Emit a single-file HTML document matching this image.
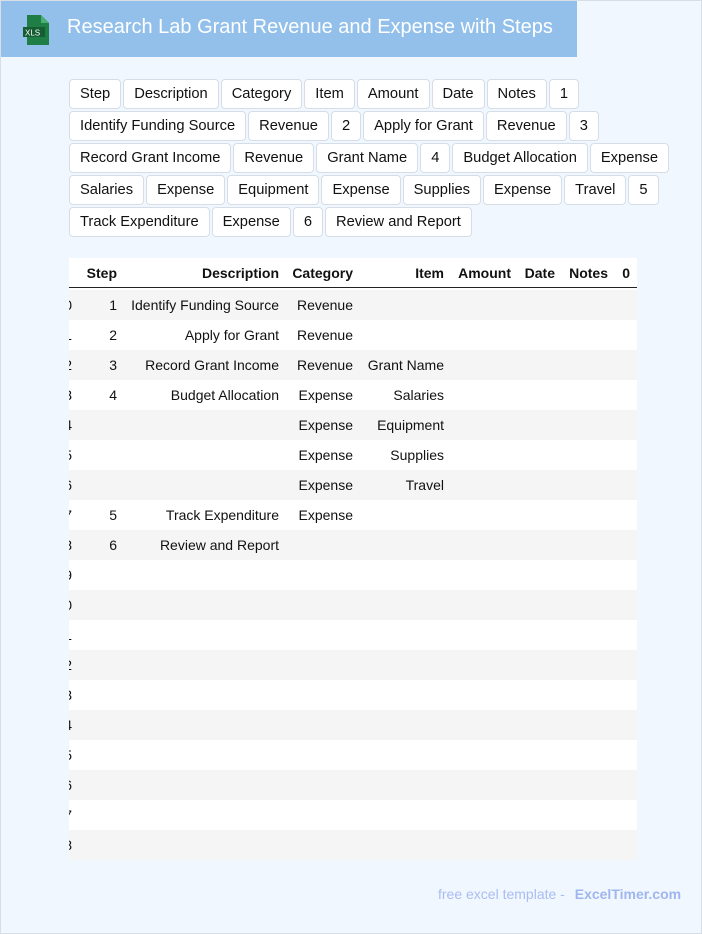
<!DOCTYPE html>
<html><head><style>
*{margin:0;padding:0;box-sizing:border-box}
body{width:702px;height:934px;background:#f0f7ff;font-family:"Liberation Sans",Arial,sans-serif;position:relative;overflow:hidden;border:1px solid #d8dee6}
.hdr{position:absolute;left:0;top:0;width:576px;height:56px;background:#92c0ea}
.hdr h1{position:absolute;left:66px;top:15px;font-size:20px;font-weight:normal;color:#fff;white-space:nowrap}
.btns{position:absolute;left:68px;top:78px;width:610px;display:flex;flex-wrap:wrap;gap:2px 2px}
.btns span{display:inline-block;height:30px;line-height:28px;padding:0 10px;background:#fff;border:1px solid #d6dde6;border-radius:4px;font-size:14.7px;color:#111;white-space:nowrap}
.tbl{position:absolute;left:68px;top:257px;width:568px;height:602px;overflow:hidden;background:#fff;font-size:14px;color:#111}
.row{position:absolute;left:0;width:568px;height:30px}
.row.g{background:#f5f5f5}
.c{position:absolute;top:7px;white-space:nowrap;text-align:right}
.h .c{font-weight:bold}
.h{border-bottom:1px solid #222}
.foot{position:absolute;top:885px;left:437px;font-size:14px;color:#aabdf0;white-space:nowrap}
.foot b{color:#a0b6ee;margin-left:6px}
</style></head><body>
<div class="hdr">
<svg style="position:absolute;left:22px;top:14px" width="28" height="30" viewBox="0 0 28 30"><path d="M4 0h14l8 8v22H4z" fill="#1e7e45"/><path d="M18 0v8h8z" fill="#4caf72"/><rect x="0" y="12" width="22" height="10" fill="#155d33"/><text x="2" y="20.5" font-size="8" fill="#fff" font-family="Liberation Sans">XLS</text></svg>
<h1>Research Lab Grant Revenue and Expense with Steps</h1>
</div>
<div class="btns">
<span>Step</span><span>Description</span><span>Category</span><span>Item</span><span>Amount</span><span>Date</span><span>Notes</span><span>1</span>
<span>Identify Funding Source</span><span>Revenue</span><span>2</span><span>Apply for Grant</span><span>Revenue</span><span>3</span>
<span>Record Grant Income</span><span>Revenue</span><span>Grant Name</span><span>4</span><span>Budget Allocation</span><span>Expense</span>
<span>Salaries</span><span>Expense</span><span>Equipment</span><span>Expense</span><span>Supplies</span><span>Expense</span><span>Travel</span><span>5</span>
<span>Track Expenditure</span><span>Expense</span><span>6</span><span>Review and Report</span>
</div>
<div class="tbl" id="t"></div>
<div class="foot">free excel template - <b>ExcelTimer.com</b></div>
<script>
var t=document.getElementById('t');
var rights=[48,210,284,375,442,486,539,561];
function row(y,cls,vals,extra){var h='<div class="row '+cls+'" style="top:'+y+'px">';
vals.forEach(function(v,i){if(v!=='')h+='<div class="c" style="right:'+(568-rights[i])+'px">'+v+'</div>';});
return h+(extra||'')+'</div>';}
var html=row(0,'h',['Step','Description','Category','Item','Amount','Date','Notes','0']);
var d=[['1','Identify Funding Source','Revenue',''],['2','Apply for Grant','Revenue',''],['3','Record Grant Income','Revenue','Grant Name'],['4','Budget Allocation','Expense','Salaries'],['','','Expense','Equipment'],['','','Expense','Supplies'],['','','Expense','Travel'],['5','Track Expenditure','Expense',''],['6','Review and Report','','']];
for(var i=0;i<19;i++){var r=d[i]||['','','',''];
html+=row(32+i*30,i%2==0?'g':'',[r[0],r[1],r[2],r[3],'','','',''],'<div class="c" style="right:565px">'+i+'</div>');}
t.innerHTML=html;
</script>
</body></html>
